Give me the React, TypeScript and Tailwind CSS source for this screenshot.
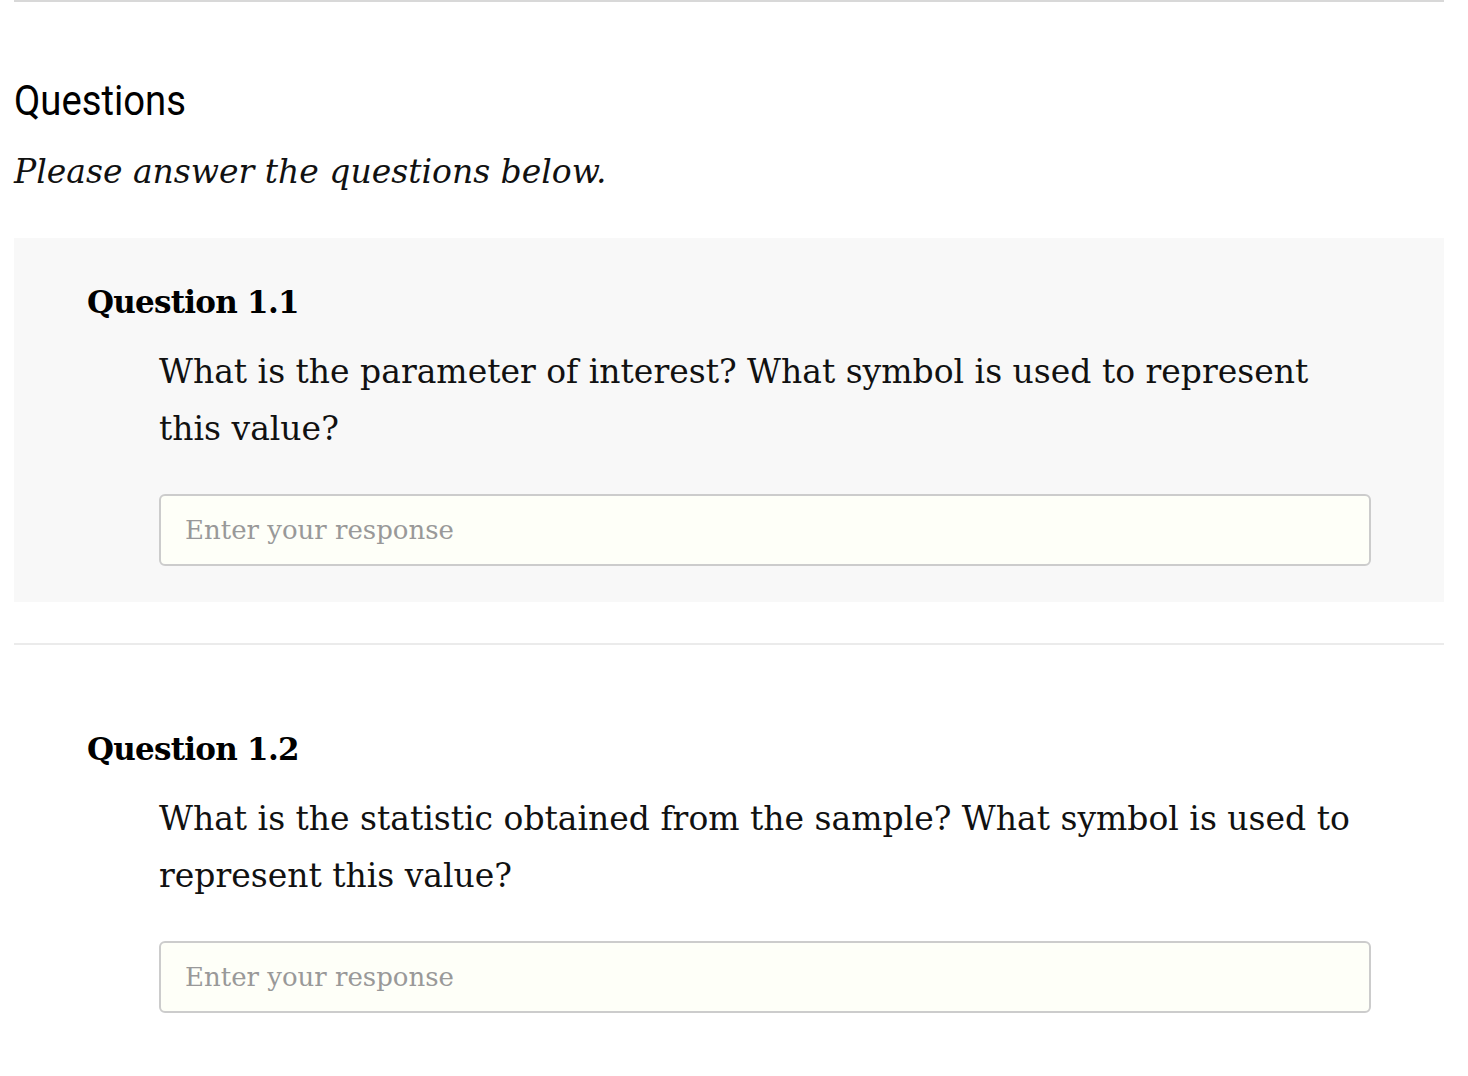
const questions = [
  {
    id: '1.1',
    text: 'What is the parameter of interest? What symbol is used to represent this value?',
    shaded: true,
  },
  {
    id: '1.2',
    text: 'What is the statistic obtained from the sample? What symbol is used to represent this value?',
    shaded: false,
  },
];

function QuestionBlock({ id, text, shaded }: { id: string; text: string; shaded: boolean }) {
  return (
    <div className={`${shaded ? 'bg-[#f8f8f8]' : 'bg-white'} pl-[73px] pr-[73px] pt-[44px] pb-[36px]`}>
      <h3 className="font-['DejaVu_Serif',serif] text-[31px] font-bold leading-[40px] tracking-[-0.75px] text-black">
        Question {id}
      </h3>
      <div className="pl-[72px] pt-[21px]">
        <p className="font-['DejaVu_Serif',serif] text-[33px] leading-[57px] text-[#111]">{text}</p>
        <input
          type="text"
          placeholder="Enter your response"
          className="mt-[37px] block h-[72px] w-full rounded-[6px] border-2 border-[#cccccc] bg-[#fefff8] px-[24px] font-['DejaVu_Serif',serif] text-[26px] text-black placeholder:text-[#999999] outline-none"
        />
      </div>
    </div>
  );
}

export default function App() {
  return (
    <div className="min-h-screen bg-white pl-[14px] pr-[24px]">
      <div className="border-t-2 border-[#d8d8d8]" />
      <h2 className="mt-[70px] font-['Roboto',sans-serif] text-[43px] leading-[56px] text-black">
        <span className="inline-block origin-left scale-x-[0.89]">Questions</span>
      </h2>
      <p className="mt-[22px] font-['DejaVu_Serif',serif] text-[33px] italic leading-[44px] text-[#111]">
        Please answer the questions below.
      </p>
      <div className="mt-[44px]">
        <QuestionBlock {...questions[0]} />
        <div className="mt-[41px] border-t-2 border-[#ebebeb]" />
        <div className="mt-[40px]">
          <QuestionBlock {...questions[1]} />
        </div>
      </div>
    </div>
  );
}
